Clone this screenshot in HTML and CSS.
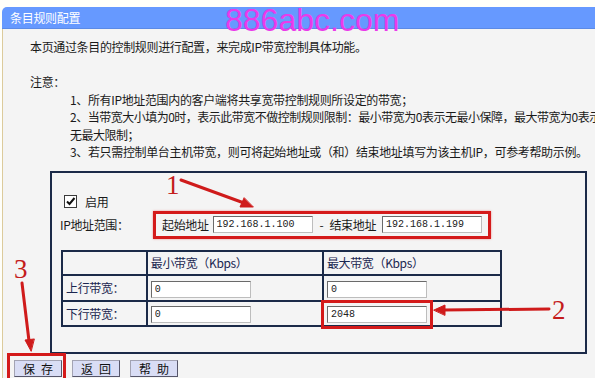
FILE: index.html
```html
<!DOCTYPE html>
<html lang="zh-CN">
<head>
<meta charset="utf-8">
<link rel="stylesheet" href="styles.css">
</head>
<body>
<div class="page">
  <div class="title">条目规则配置</div>
  <div class="panel">
    <p class="intro">本页通过条目的控制规则进行配置，来完成IP带宽控制具体功能。</p>
    <p class="note-head">注意：</p>
    <ul class="notes">
      <li>1、所有IP地址范围内的客户端将共享宽带控制规则所设定的带宽；</li>
      <li class="tight">2、当带宽大小填为0时，表示此带宽不做控制规则限制：最小带宽为0表示无最小保障，最大带宽为0表示<br>无最大限制；</li>
      <li>3、若只需控制单台主机带宽，则可将起始地址或（和）结束地址填写为该主机IP，可参考帮助示例。</li>
    </ul>
    <div class="box">
      <div class="check-row">
        <span class="checkbox"><svg width="11" height="11" viewBox="0 0 11 11"><path d="M2 5.5 L4.5 8 L9.5 2" fill="none" stroke="#111" stroke-width="2"/></svg></span>
        <span>启用</span>
      </div>
      <div class="ip-row">
        <span class="ip-label">IP地址范围：</span>
        <span class="range">
          <span class="lbl-start">起始地址</span>
          <input class="field" type="text" value="192.168.1.100">
          <span class="dash">-</span>
          <span class="lbl-end">结束地址</span>
          <input class="field" type="text" value="192.168.1.199">
        </span>
      </div>
      <table class="bw">
        <tr class="r-head">
          <td class="c1"></td>
          <td class="c2">最小带宽（Kbps）</td>
          <td class="c3">最大带宽（Kbps）</td>
        </tr>
        <tr class="r-up">
          <td>上行带宽：</td>
          <td><input class="field" type="text" value="0"></td>
          <td><input class="field" type="text" value="0"></td>
        </tr>
        <tr class="r-down">
          <td>下行带宽：</td>
          <td><input class="field" type="text" value="0"></td>
          <td><input class="field marked" type="text" value="2048"></td>
        </tr>
      </table>
    </div>
    <div class="buttons">
      <span class="save-wrap"><button class="btn">保存</button></span>
      <button class="btn">返回</button>
      <button class="btn">帮助</button>
    </div>
  </div>
</div>
<div class="watermark">886abc.com</div>
<svg class="annot" width="595" height="378" viewBox="0 0 595 378">
  <g stroke="#cf1b1b" stroke-width="3" stroke-linecap="round" fill="#cf1b1b">
    <line x1="181" y1="180" x2="244" y2="203"/>
    <polygon points="253,207 240,207 244,198" stroke-width="1"/>
    <line x1="549" y1="309" x2="443" y2="310"/>
    <polygon points="434,310 445,305 445,315" stroke-width="1"/>
    <line x1="22" y1="283" x2="29" y2="341"/>
    <polygon points="31,351 25,340 34,339" stroke-width="1"/>
  </g>
  <g class="nums" fill="#c41c1c">
    <text x="166" y="194">1</text>
    <text x="552" y="319">2</text>
    <text x="14" y="278">3</text>
  </g>
</svg>
</body>
</html>
```

FILE: styles.css
```css
body {
  margin: 0;
  width: 595px;
  height: 378px;
  overflow: hidden;
  position: relative;
  background: #fffffa;
  font-family: "Noto Sans CJK SC", "Liberation Sans", sans-serif;
  font-size: 12px;
  color: #1a1a1a;
}

.page {
  padding: 7px 0 0 2px;
}

.title {
  height: 21px;
  line-height: 21px;
  background: #6699ff;
  border-bottom: 1px solid #5b8ae6;
  border-top-left-radius: 5px;
  color: #fff;
  padding-left: 8px;
  letter-spacing: -0.3px;
}

.panel {
  background: #f4f4f4;
  border-left: 1px solid #dccb9c;
  height: 349px;
  letter-spacing: -0.35px;
}

.intro {
  margin: 0;
  padding: 9px 0 0 27px;
  line-height: 17px;
}

.note-head {
  margin: 18px 0 0 27px;
  line-height: 17.5px;
}

.notes {
  list-style: none;
  margin: 0;
  padding: 0 0 0 67px;
  line-height: 17.5px;
  white-space: nowrap;
}

.notes .tight {
  letter-spacing: -0.5px;
}

.box {
  box-sizing: border-box;
  width: 537px;
  height: 183px;
  margin: 10px 0 0 47px;
  border: 2px solid #1b2a48;
  padding: 20px 0 0 8px;
}

.check-row {
  height: 18px;
  display: flex;
  align-items: center;
  gap: 8px;
  padding-left: 4px;
}

.checkbox {
  box-sizing: border-box;
  width: 13px;
  height: 13px;
  border: 1px solid #3a3a3a;
  background: #fff;
  display: flex;
  align-items: center;
  justify-content: center;
}

.ip-row {
  display: flex;
  align-items: center;
  height: 28px;
}

.ip-label {
  width: 93px;
}

.range {
  box-sizing: border-box;
  height: 28px;
  display: flex;
  align-items: center;
  border: 3px solid #d41a1a;
  box-shadow: 0 0 2px rgba(230, 40, 40, 0.5);
  padding: 0 6px;
}

.lbl-start {
  margin-right: 4px;
}

.dash {
  margin: 0 6px 0 7px;
}

.lbl-end {
  margin-right: 6px;
}

.field {
  box-sizing: border-box;
  width: 100px;
  height: 17px;
  margin: 0;
  border: 1px solid;
  border-color: #6a6a6a #bdbdbd #bdbdbd #6a6a6a;
  background: #fff;
  font-family: "Liberation Mono", monospace;
  font-size: 10px;
  color: #222;
  padding: 0 3px;
  letter-spacing: 0;
}

.bw {
  border-collapse: collapse;
  width: 441px;
  margin: 11px 0 0 1px;
  color: #1b2650;
}

.bw td {
  border: 2px solid #1b2a48;
  padding: 0 3px;
}

.bw .c1 { width: 79px; }
.bw .c2 { width: 171px; }
.bw .c3 { width: 173px; }

.r-head { height: 24px; }
.r-up { height: 26px; }
.r-down { height: 25px; }

.marked {
  outline: 3px solid #d41a1a;
  outline-offset: 3px;
}

.buttons {
  display: flex;
  align-items: center;
  margin-top: 6px;
  padding-left: 11px;
  gap: 10px;
}

.btn {
  box-sizing: border-box;
  width: 48px;
  height: 17px;
  margin: 0;
  border: 1px solid;
  border-color: #a3a3b3 #56566a #56566a #a3a3b3;
  background: #d9ddf5;
  font-family: "Noto Sans CJK SC", sans-serif;
  font-size: 12px;
  line-height: 15px;
  color: #111;
  letter-spacing: 6px;
  padding: 0 0 0 6px;
}

.save-wrap {
  position: relative;
  display: inline-flex;
}

.save-wrap::after {
  content: "";
  position: absolute;
  left: -7px;
  right: -4px;
  top: -7px;
  bottom: -5px;
  border: 3px solid #d41a1a;
}

.watermark {
  position: absolute;
  left: 225px;
  top: 4px;
  font-family: "Liberation Sans", sans-serif;
  font-size: 32px;
  line-height: 32px;
  color: #ea3aea;
  letter-spacing: 0;
}

.annot {
  position: absolute;
  left: 0;
  top: 0;
  pointer-events: none;
}

.nums {
  font-family: "Liberation Serif", serif;
  font-size: 27px;
}
```
